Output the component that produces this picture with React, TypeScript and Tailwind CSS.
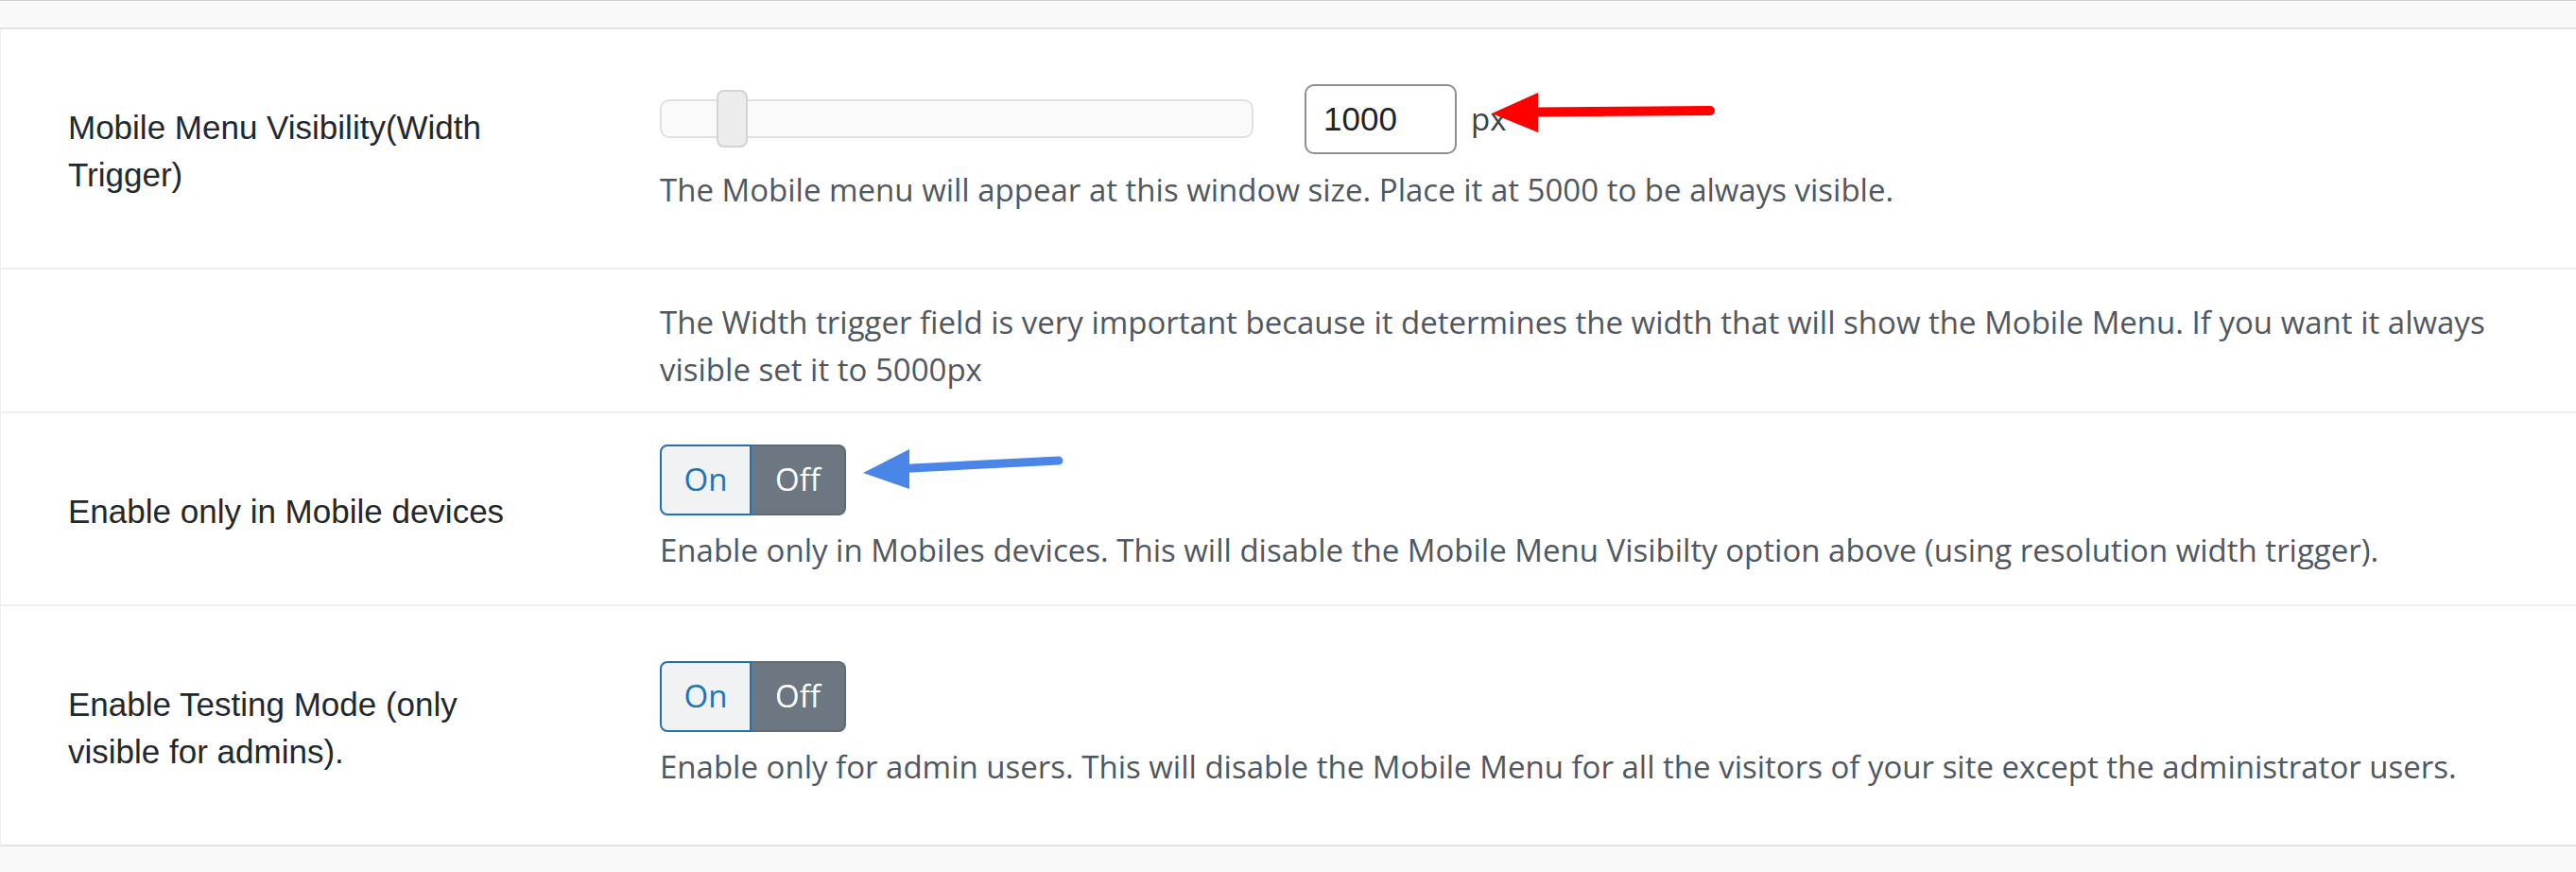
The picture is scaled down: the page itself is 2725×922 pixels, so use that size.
import React from 'react';

const labelFont = "font-['Liberation_Sans',Arial,sans-serif]";
const descFont = "font-['Open_Sans','Noto_Sans',sans-serif]";

const Toggle = ({ on }: { on: boolean }) => (
  <div className={`flex h-[75px] w-[197px] ${descFont} text-[33px]`}>
    <button
      className={`flex-1 rounded-l-[8px] border-2 ${
        on ? 'bg-[#6c7781] border-[#5f6b75] text-white' : 'bg-[#f0f2f4] border-[#2271b1] text-[#2271b1]'
      }`}
    >
      On
    </button>
    <button
      className={`w-[100px] rounded-r-[8px] border-2 border-l-0 ${
        on ? 'bg-[#f0f2f4] border-[#2271b1] text-[#2271b1]' : 'bg-[#6c7781] border-[#5f6b75] text-white'
      }`}
    >
      Off
    </button>
  </div>
);

const Desc = ({ children }: { children: React.ReactNode }) => (
  <p className={`${descFont} text-[33px] leading-[50px] text-[#50575e]`}>{children}</p>
);

const Row = ({ label, children, last }: { label?: string; children: React.ReactNode; last?: boolean }) => (
  <div className={`grid grid-cols-[697px_1fr] border-b-2 ${last ? 'border-[#e3e3e3]' : 'border-[#efefef]'}`}>
    {label ? (
      <div className={`pl-[71px] pr-[114px] pt-[79px] pb-[73px] text-[35px] leading-[50px] text-[#23282d] ${labelFont}`}>
        {label}
      </div>
    ) : (
      <div />
    )}
    <div className="flex flex-col justify-center pr-[25px]">{children}</div>
  </div>
);

export default function App() {
  const [width, setWidth] = React.useState(1000);

  return (
    <div className="relative min-h-[922px] w-full bg-[#f9f9f9]">
      <div className="h-[31px] border-t border-b-2 border-t-[#cfcfcf] border-b-[#e2e2e2] bg-[#f9f9f9]" />

      <div className="bg-white border-l border-[#eeeeee]">
        <Row label="Mobile Menu Visibility(Width Trigger)">
          <div className="flex h-[74px] items-center">
            <div className="relative h-[41px] w-[628px] rounded-[10px] border-2 border-[#e0e0e0] bg-[#fafafa]">
              <div className="absolute left-[58px] top-[-12px] h-[61px] w-[33px] rounded-[8px] border-2 border-[#d3d3d3] bg-[#ececec]" />
            </div>
            <input
              value={width}
              onChange={(e) => setWidth(Number(e.target.value) || 0)}
              className={`ml-[54px] h-[74px] w-[161px] rounded-[10px] border-2 border-[#8c8f94] bg-white pl-[18px] text-[35px] text-[#1d2327] outline-none ${labelFont}`}
            />
            <span className={`ml-[15px] text-[33px] text-[#3c434a] ${descFont}`}>px</span>
          </div>
          <div className="mt-[13px]">
            <Desc>The Mobile menu will appear at this window size. Place it at 5000 to be always visible.</Desc>
          </div>
        </Row>

        <Row>
          <div className="pt-[31px] pb-[19px]">
            <Desc>
              The Width trigger field is very important because it determines the width that will show the Mobile Menu. If you want it always visible set it to 5000px
            </Desc>
          </div>
        </Row>

        <Row label="Enable only in Mobile devices">
          <Toggle on={false} />
          <div className="mt-[12px]">
            <Desc>
              Enable only in Mobiles devices. This will disable the Mobile Menu Visibilty option above (using resolution width trigger).
            </Desc>
          </div>
        </Row>

        <Row label="Enable Testing Mode (only visible for admins)." last>
          <Toggle on={false} />
          <div className="mt-[12px]">
            <Desc>
              Enable only for admin users. This will disable the Mobile Menu for all the visitors of your site except the administrator users.
            </Desc>
          </div>
        </Row>
      </div>

      {/* annotation arrows */}
      <svg className="pointer-events-none absolute left-[1570px] top-[90px]" width="250" height="60" viewBox="0 0 250 60">
        <line x1="50" y1="28.5" x2="239" y2="27" stroke="#ff0000" strokeWidth="10" strokeLinecap="round" />
        <polygon points="8,30 57,8 57,50" fill="#ff0000" />
      </svg>
      <svg className="pointer-events-none absolute left-[900px] top-[465px]" width="230" height="60" viewBox="0 0 230 60">
        <line x1="55" y1="30.5" x2="220" y2="22" stroke="#4a86e8" strokeWidth="9" strokeLinecap="round" />
        <polygon points="13,35 62,10 62,52" fill="#4a86e8" />
      </svg>
    </div>
  );
}
